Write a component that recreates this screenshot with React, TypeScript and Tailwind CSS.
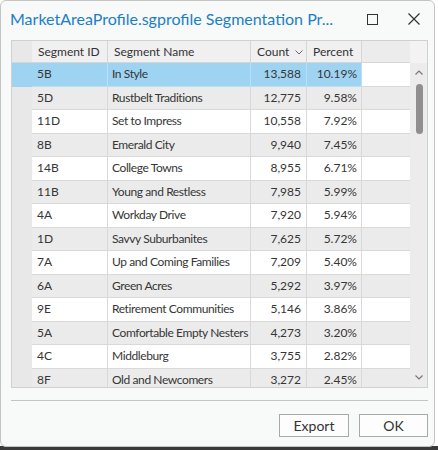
import React from "react";

const rows: [string, string, string, string][] = [
  ["5B", "In Style", "13,588", "10.19%"],
  ["5D", "Rustbelt Traditions", "12,775", "9.58%"],
  ["11D", "Set to Impress", "10,558", "7.92%"],
  ["8B", "Emerald City", "9,940", "7.45%"],
  ["14B", "College Towns", "8,955", "6.71%"],
  ["11B", "Young and Restless", "7,985", "5.99%"],
  ["4A", "Workday Drive", "7,920", "5.94%"],
  ["1D", "Savvy Suburbanites", "7,625", "5.72%"],
  ["7A", "Up and Coming Families", "7,209", "5.40%"],
  ["6A", "Green Acres", "5,292", "3.97%"],
  ["9E", "Retirement Communities", "5,146", "3.86%"],
  ["5A", "Comfortable Empty Nesters", "4,273", "3.20%"],
  ["4C", "Middleburg", "3,755", "2.82%"],
  ["8F", "Old and Newcomers", "3,272", "2.45%"],
];

const font = { fontFamily: 'Lato, "Noto Sans", sans-serif' };

export default function App() {
  return (
    <div className="w-[438px] h-[450px] bg-white relative overflow-hidden" style={font}>
      <div className="absolute left-0 right-0 bottom-0 h-[4px] bg-[#3a3a3a]" />
      <div className="relative w-[435px] h-[447px] border border-[#c4c4c4] rounded-[6px] bg-[#f8f9f9] flex flex-col">
        {/* Title bar */}
        <div className="h-[39px] flex items-center pl-[9px] pr-[12px] shrink-0">
          <div className="text-[16px] text-[#1b7fc5] leading-none whitespace-nowrap pb-[3px]">
            MarketAreaProfile.sgprofile Segmentation Pr...
          </div>
          <div className="flex-1" />
          <div className="w-[11px] h-[11px] border-[1.3px] border-[#333] mr-[30px] mb-[3px]" />
          <svg width="12" height="12" viewBox="0 0 12 12" className="mb-[3px] mr-[2px]">
            <path d="M0.5 0.5 L11.5 11.5 M11.5 0.5 L0.5 11.5" stroke="#333" strokeWidth="1.2" />
          </svg>
        </div>

        {/* Grid */}
        <div className="ml-[10px] w-[417px] h-[348px] border border-[#d0d0d0] bg-[#f0f0f0] flex shrink-0 overflow-hidden">
          <div className="w-[398px] flex flex-col">
            {/* Header */}
            <div className="flex h-[22px] shrink-0 text-[12px] text-[#333] border-b border-[#d6d6d6]">
              <div className="w-[20px] bg-[#e8e8e8]" />
              <div className="w-[76px] bg-[#f0f0f0] border-r border-[#d6d6d6] pl-[6px] flex items-center">Segment ID</div>
              <div className="w-[143px] bg-[#f0f0f0] border-r border-[#d6d6d6] pl-[6px] flex items-center">Segment Name</div>
              <div className="w-[56px] bg-[#f0f0f0] border-r border-[#d6d6d6] pl-[6px] flex items-center">
                Count
                <svg width="8" height="5" viewBox="0 0 8 5" className="ml-[6px] mt-[1px]">
                  <path d="M0.5 0.5 L4 4 L7.5 0.5" fill="none" stroke="#666" strokeWidth="1" />
                </svg>
              </div>
              <div className="w-[55px] bg-[#f0f0f0] border-r border-[#d6d6d6] pl-[6px] flex items-center">Percent</div>
              <div className="w-[48px] bg-[#ececec]" />
            </div>
            {/* Rows */}
            <div className="flex flex-col">
              {rows.map((r, i) => {
                const sel = i === 0;
                const bg = sel ? "bg-[#9fd3f2]" : i % 2 === 1 ? "bg-[#ebebeb]" : "bg-white";
                const bd = sel ? "border-[#b9e0f6]" : "border-[#d9d9d9]";
                return (
                  <div key={i} className="flex h-[23.5px] shrink-0 text-[12px] text-[#363636]">
                    <div className={`w-[20px] ${sel ? "bg-[#9fd3f2]" : "bg-[#e8e8e8]"}`} />
                    <div className={`w-[76px] ${bg} border-r border-b ${bd} pl-[5px] flex items-center`}>{r[0]}</div>
                    <div className={`w-[143px] ${bg} border-r border-b ${bd} pl-[4px] flex items-center whitespace-nowrap tracking-[-0.4px]`}>{r[1]}</div>
                    <div className={`w-[56px] ${bg} border-r border-b ${bd} pr-[5px] flex items-center justify-end`}>{r[2]}</div>
                    <div className={`w-[55px] ${bg} border-r border-b ${bd} pr-[4px] flex items-center justify-end`}>{r[3]}</div>
                    <div className={`w-[48px] ${i % 2 === 1 ? "bg-[#ebebeb]" : "bg-white"} border-b border-[#d9d9d9]`} />
                  </div>
                );
              })}
            </div>
          </div>
          {/* Scrollbar */}
          <div className="w-[17px] flex flex-col">
            <div className="h-[22px] bg-[#f3f3f3]" />
            <div className="flex-1 bg-[#ececec] flex flex-col items-center">
              <svg width="8" height="5" viewBox="0 0 8 5" className="mt-[7px]">
                <path d="M0.5 4.5 L4 1 L7.5 4.5" fill="none" stroke="#777" strokeWidth="1.2" />
              </svg>
              <div className="w-[7px] h-[50px] rounded-full bg-[#8f8f8f] mt-[9px] ml-[1px]" />
              <div className="flex-1" />
              <svg width="8" height="5" viewBox="0 0 8 5" className="mb-[7px]">
                <path d="M0.5 0.5 L4 4 L7.5 0.5" fill="none" stroke="#777" strokeWidth="1.2" />
              </svg>
            </div>
          </div>
        </div>

        {/* Divider */}
        <div className="ml-[10px] w-[417px] h-px bg-[#c4c4c4] mt-[12px] shrink-0" />

        {/* Buttons */}
        <div className="flex justify-end gap-[10px] mt-[13px] pr-[6px]">
          <button className="w-[70px] h-[23px] border border-[#a8a8a8] bg-[#fdfdfd] text-[14px] text-[#333] flex items-center justify-center">
            Export
          </button>
          <button className="w-[69px] h-[23px] border border-[#a8a8a8] bg-[#fdfdfd] text-[14px] text-[#333] flex items-center justify-center">
            OK
          </button>
        </div>
      </div>
    </div>
  );
}
